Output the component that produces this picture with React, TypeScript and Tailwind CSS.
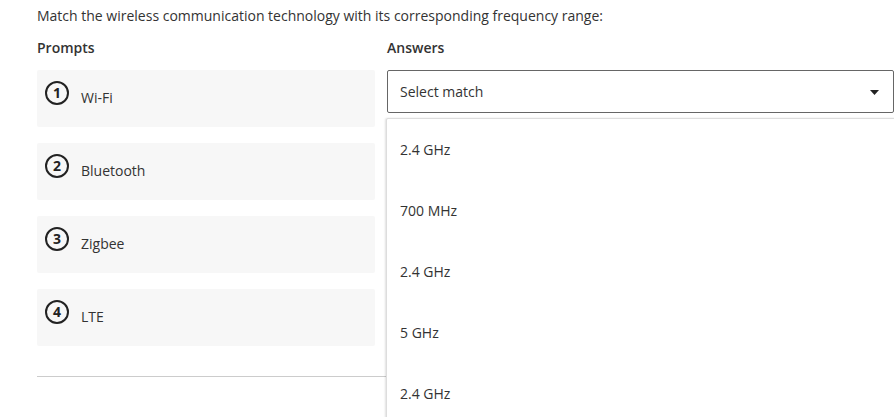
import React from 'react';

const prompts = ['Wi-Fi', 'Bluetooth', 'Zigbee', 'LTE'];
const options = ['2.4 GHz', '700 MHz', '2.4 GHz', '5 GHz', '2.4 GHz'];

export default function App() {
  return (
    <div className="w-[894px] h-[417px] overflow-hidden bg-white font-['Open_Sans',sans-serif] text-[14px] text-[#333]">
      <div className="pl-[37px] pt-[7px]">
        <p className="leading-[18px]">Match the wireless communication technology with its corresponding frequency range:</p>

        <div className="mt-[14px] grid grid-cols-[338px_540px] gap-x-[12px]">
          {/* Prompts */}
          <div>
            <h3 className="font-semibold leading-[18px]">Prompts</h3>
            <div className="mt-[13px] flex flex-col gap-[16px]">
              {prompts.map((p, i) => (
                <div key={p} className="h-[57px] bg-[#f7f7f7] rounded-[2px] pt-[11px] pl-[8px] flex items-start">
                  <span className="w-6 h-6 rounded-full border-2 border-[#222] flex items-center justify-center text-[14px] font-bold leading-none text-[#222]">
                    {i + 1}
                  </span>
                  <span className="ml-[12px] mt-[8px] leading-[18px]">{p}</span>
                </div>
              ))}
            </div>
          </div>

          {/* Answers */}
          <div className="relative">
            <h3 className="font-semibold leading-[18px]">Answers</h3>
            <div className="mt-[13px] h-[43px] w-[507px] border border-[#666] rounded-[2px] flex items-center justify-between pl-[12px] pr-[14px]">
              <span>Select match</span>
              <svg width="9" height="5" viewBox="0 0 9 5" className="mt-[1px]">
                <path d="M0 0h9L4.5 5z" fill="#222" />
              </svg>
            </div>

            <div className="absolute top-[79px] left-[-1px] w-[540px] h-[400px] bg-white border border-[#ddd] rounded-[2px] shadow-[-1px_0_2px_rgba(0,0,0,0.12)] z-10">
              {options.map((o, i) => (
                <div key={i} className="h-[61px] flex items-center pl-[13px]">
                  {o}
                </div>
              ))}
            </div>
          </div>
        </div>

        <div className="mt-[30px] w-[350px] h-px bg-[#ccc]" />
      </div>
    </div>
  );
}
